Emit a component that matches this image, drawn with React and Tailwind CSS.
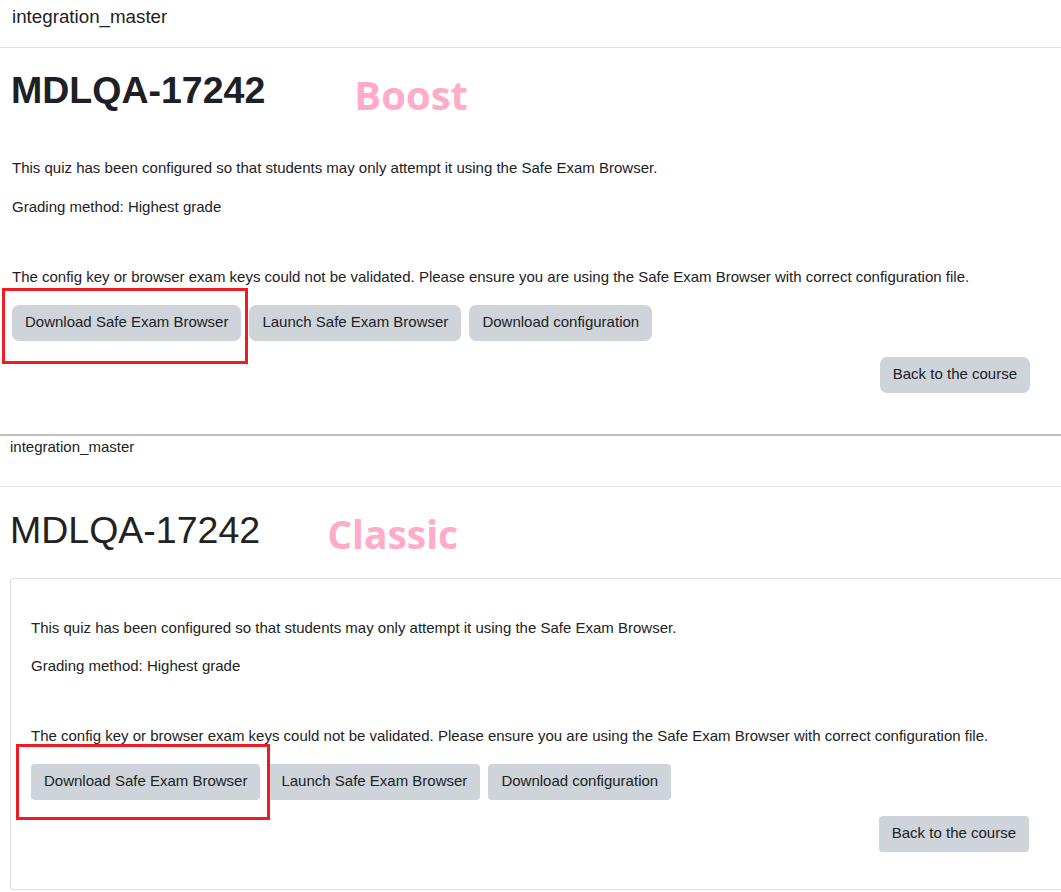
import React from "react";

function Btn({ children, classic }) {
  return (
    <button
      className={
        "h-[36px] px-[13px] bg-[#ced4da] text-[15px] leading-[22.5px] whitespace-nowrap " +
        (classic ? "rounded-[4px] text-[#222]" : "rounded-[7px] text-[#1d2125]")
      }
    >
      {children}
    </button>
  );
}

function RedBox({ className }) {
  return <div className={"absolute border-[3px] border-[#ed1c24] pointer-events-none " + className} />;
}

function Label({ children, className }) {
  return (
    <span className={"font-['Open_Sans',sans-serif] font-bold leading-none text-[#ffabc9] " + className}>
      {children}
    </span>
  );
}

function BoostView() {
  return (
    <section className="text-[#1d2125]">
      <div className="h-[48px] border-b border-[#dee2e6] pl-[12px] pt-[3px] text-[18.75px] leading-[28px]">
        integration_master
      </div>
      <div className="flex items-start mt-[20px] pl-[11px]">
        <h1 className="text-[37.5px] leading-[44px] font-bold">MDLQA-17242</h1>
        <Label className="text-[40px] ml-[89px] mt-[7px]">Boost</Label>
      </div>
      <div className="pl-3 text-[15px] leading-[22.5px]">
        <p className="mt-[42px]">This quiz has been configured so that students may only attempt it using the Safe Exam Browser.</p>
        <p className="mt-[16.5px]">Grading method: Highest grade</p>
        <p className="mt-[47.5px]">
          The config key or browser exam keys could not be validated. Please ensure you are using the Safe Exam Browser with correct configuration file.
        </p>
        <div className="relative flex gap-2 mt-[16px]">
          <RedBox className="-left-[10px] -top-[17px] w-[246px] h-[76px]" />
          <Btn>Download Safe Exam Browser</Btn>
          <Btn>Launch Safe Exam Browser</Btn>
          <Btn>Download configuration</Btn>
        </div>
        <div className="flex justify-end mt-4 pr-[31px]">
          <Btn>Back to the course</Btn>
        </div>
      </div>
      <div className="h-[43px] border-b-2 border-[#bdbdbd]" />
    </section>
  );
}

function ClassicView() {
  return (
    <section className="text-[#222]">
      <div className="h-[51px] border-b border-[#e6e6e6] pl-[10px] text-[15px] leading-[22px]">
        integration_master
      </div>
      <div className="flex items-start mt-[21px] pl-[10px]">
        <h1 className="text-[37.5px] leading-[44px]">MDLQA-17242</h1>
        <Label className="text-[39px] ml-[67px] mt-[6px]">Classic</Label>
      </div>
      <div className="ml-[10px] mt-[25px] border border-r-0 border-[#dedede] rounded-l-[4px] pl-[20px] pt-[38.5px] pb-[37px] text-[15px] leading-[22.5px]">
        <p>This quiz has been configured so that students may only attempt it using the Safe Exam Browser.</p>
        <p className="mt-[15.5px]">Grading method: Highest grade</p>
        <p className="mt-[47.5px]">
          The config key or browser exam keys could not be validated. Please ensure you are using the Safe Exam Browser with correct configuration file.
        </p>
        <div className="relative flex gap-2 mt-[16px]">
          <RedBox className="-left-[15px] -top-[20px] w-[254px] h-[76px]" />
          <Btn classic>Download Safe Exam Browser</Btn>
          <Btn classic>Launch Safe Exam Browser</Btn>
          <Btn classic>Download configuration</Btn>
        </div>
        <div className="flex justify-end mt-4 pr-[32px]">
          <Btn classic>Back to the course</Btn>
        </div>
      </div>
    </section>
  );
}

export default function App() {
  return (
    <div className="w-full h-[892px] overflow-hidden bg-white font-['Liberation_Sans',Arial,sans-serif]">
      <BoostView />
      <ClassicView />
    </div>
  );
}
